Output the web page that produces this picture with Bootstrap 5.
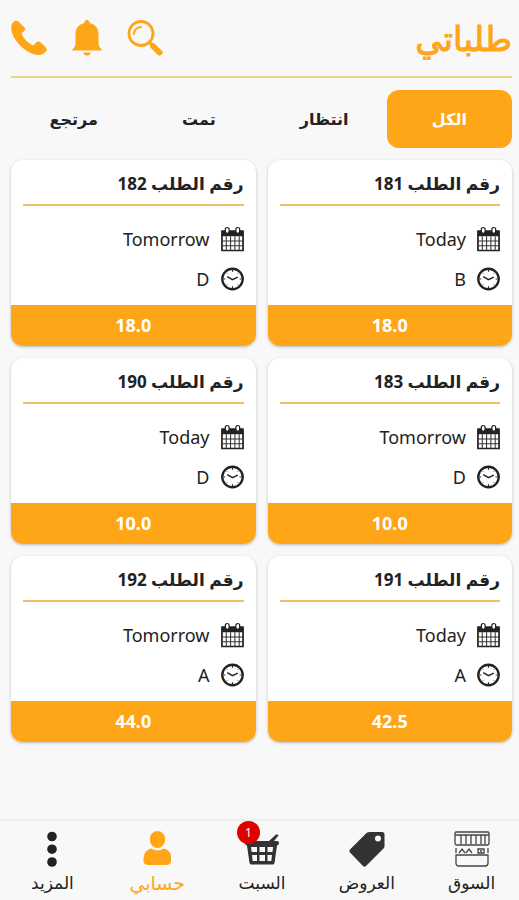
<!DOCTYPE html>
<html lang="ar" dir="rtl">
<head>
<meta charset="utf-8">
<meta name="viewport" content="width=device-width, initial-scale=1">
<title>طلباتي</title>
<link href="https://cdn.jsdelivr.net/npm/bootstrap@5.3.0/dist/css/bootstrap.min.css" rel="stylesheet">
<style>
  :root { --brand: #ffa518; --ink: #222; }
  body { background: #f8f8f8; color: var(--ink); font-family: "Noto Sans", "DejaVu Sans", sans-serif; font-size: 18px; line-height: 24px; }
  svg { display: block; }
  .page-head { height: 78px; padding-bottom: 1px; border-bottom: 2px solid #f0d28c; margin-inline: 7px 11px; color: var(--brand); }
  .page-head h1 { font-size: 34px; line-height: 44px; font-weight: 500; -webkit-text-stroke: 1px currentColor; }
  .icon-btn { border: 0; padding: 0; background: none; color: inherit; }
  .page-main { padding-block: 12px 96px; padding-inline: 7px 11px; }
  .filters .nav-link { height: 58px; border-radius: 12px; font-size: 16px; font-weight: 700; color: var(--ink); padding: 0; }
  .filters .nav-link.active { background: var(--brand); color: #fff; }
  .orders { display: grid; grid-template-columns: 1fr 1fr; gap: 12px; margin-top: 12px; }
  .order { border: 0; border-radius: 12px; overflow: hidden; box-shadow: 0 1px 3px rgba(0,0,0,.25); color: var(--ink); }
  .order .card-body { padding: 12px 12px 10px; }
  .order h2 { font-size: 17px; line-height: 24px; font-weight: 700; padding-bottom: 8px; border-bottom: 2px solid #efc063; margin: 0 0 17px; }
  .order-line { gap: 11px; height: 32px; margin-bottom: 8px; }
  .order-line:last-child { margin-bottom: 0; }
  .order .card-footer { background: var(--brand); color: #fff; border: 0; font-weight: 700; font-size: 18px; line-height: 25px; padding: 8px; border-radius: 0; }
  .tabbar { background: #f8f8f8; border-top: 2px solid #eee; height: 81px; margin-inline-start: -5px; }
  .tabbar a { color: var(--ink); font-size: 17px; line-height: 24px; padding-top: 10px; text-decoration: none; }
  .tabbar a.active { color: var(--brand); font-size: 19px; }
  .cart-count { position: absolute; top: -10px; left: -7px; width: 23px; height: 23px; border-radius: 50%; background: #e00000; color: #fff; font-size: 12px; line-height: 23px; }
</style>
</head>
<body>
<svg width="0" height="0" class="position-absolute" aria-hidden="true">
  <symbol id="calendar" viewBox="0 0 24 26">
    <path d="M1 5h22v20H1z" fill="none" stroke="#222" stroke-width="1.800"/>
    <path d="M1 4h22v6H1z" fill="#222"/>
    <path d="M1 15h22M1 20h22M5.500 10v15M10 10v15M14.500 10v15M19 10v15" stroke="#333" stroke-width="1.100"/>
    <g fill="#fff" stroke="#222" stroke-width="1.300"><rect x="4.500" y="1" width="4" height="6" rx="2"/><rect x="15.500" y="1" width="4" height="6" rx="2"/></g>
  </symbol>
  <symbol id="clock" viewBox="0 0 24 24">
    <circle cx="12" cy="12" r="10.700" fill="none" stroke="#222" stroke-width="2.400"/>
    <path d="M6.500 9.500l5.500 3.200 5.500-2.600" fill="none" stroke="#222" stroke-width="1.500"/>
    <path d="M12 2.500v2M12 19.500v2M2.500 12h2M19.500 12h2M5.300 5.300l1 1M18.700 5.300l-1 1M5.300 18.700l1-1M18.700 18.700l-1-1" stroke="#222" stroke-width="1"/>
  </symbol>
</svg>

<header class="page-head d-flex justify-content-between align-items-center">
  <h1 class="m-0">طلباتي</h1>
  <div class="d-flex align-items-center gap-4">
    <button class="icon-btn" type="button" aria-label="بحث">
      <svg width="36" height="36" viewBox="0 0 36 36" fill="none" stroke="currentColor"><circle cx="14" cy="13.500" r="12" stroke-width="2.800"/><path d="M7 14a7 7 0 0 1 7-7" stroke-width="2" stroke-linecap="round"/><path d="M26 26l6.500 6.500" stroke-width="6" stroke-linecap="round"/><path d="M22.500 22.500l3 3" stroke-width="3"/></svg>
    </button>
    <button class="icon-btn" type="button" aria-label="الإشعارات">
      <svg width="32" height="36" viewBox="0 0 32 36" fill="currentColor"><path d="M16 0a2.600 2.600 0 0 1 2.600 3C24.500 4.500 27.500 8.500 27.500 14v9c0 3 1 4.500 3.200 6.500v1H1.300v-1C3.500 27.500 4.500 26 4.500 23v-9c0-5.500 3-9.500 8.900-11A2.600 2.600 0 0 1 16 0zM12.500 32.500h7a3.500 3 0 0 1-7 0z"/></svg>
    </button>
    <button class="icon-btn" type="button" aria-label="اتصال">
      <svg width="36" height="36" viewBox="0 0 36 36" fill="currentColor"><path d="M2 2.500C3.500.500 6 0 7.500 1.500l6 6c1.200 1.300.8 2.300-.5 3.500l-2.500 2.500c2 5 6 9.500 12 12L25 22.500c1.500-1.200 3-1.400 4.300-.2l5.200 4.700c1.800 1.700 1.500 3.200.2 4.700-2.700 3.300-7 4-12 2.500C11.500 30.500 2.500 20 .500 11-.200 7.500.300 4.500 2 2.500z"/></svg>
    </button>
  </div>
</header>

<main class="page-main">
  <nav class="nav nav-pills nav-justified filters flex-nowrap" aria-label="حالة الطلب">
    <button type="button" class="nav-link active flex-fill w-25">الكل</button>
    <button type="button" class="nav-link flex-fill w-25">انتظار</button>
    <button type="button" class="nav-link flex-fill w-25">تمت</button>
    <button type="button" class="nav-link flex-fill w-25">مرتجع</button>
  </nav>

  <section class="orders">
    <article class="card order">
      <div class="card-body">
        <h2>رقم الطلب <span>181</span></h2>
        <div class="order-line d-flex align-items-center"><svg width="23" height="26"><use href="#calendar"/></svg><span>Today</span></div>
        <div class="order-line d-flex align-items-center"><svg width="23" height="24"><use href="#clock"/></svg><span>B</span></div>
      </div>
      <div class="card-footer text-center">18.0</div>
    </article>
    <article class="card order">
      <div class="card-body">
        <h2>رقم الطلب <span>182</span></h2>
        <div class="order-line d-flex align-items-center"><svg width="23" height="26"><use href="#calendar"/></svg><span>Tomorrow</span></div>
        <div class="order-line d-flex align-items-center"><svg width="23" height="24"><use href="#clock"/></svg><span>D</span></div>
      </div>
      <div class="card-footer text-center">18.0</div>
    </article>
    <article class="card order">
      <div class="card-body">
        <h2>رقم الطلب <span>183</span></h2>
        <div class="order-line d-flex align-items-center"><svg width="23" height="26"><use href="#calendar"/></svg><span>Tomorrow</span></div>
        <div class="order-line d-flex align-items-center"><svg width="23" height="24"><use href="#clock"/></svg><span>D</span></div>
      </div>
      <div class="card-footer text-center">10.0</div>
    </article>
    <article class="card order">
      <div class="card-body">
        <h2>رقم الطلب <span>190</span></h2>
        <div class="order-line d-flex align-items-center"><svg width="23" height="26"><use href="#calendar"/></svg><span>Today</span></div>
        <div class="order-line d-flex align-items-center"><svg width="23" height="24"><use href="#clock"/></svg><span>D</span></div>
      </div>
      <div class="card-footer text-center">10.0</div>
    </article>
    <article class="card order">
      <div class="card-body">
        <h2>رقم الطلب <span>191</span></h2>
        <div class="order-line d-flex align-items-center"><svg width="23" height="26"><use href="#calendar"/></svg><span>Today</span></div>
        <div class="order-line d-flex align-items-center"><svg width="23" height="24"><use href="#clock"/></svg><span>A</span></div>
      </div>
      <div class="card-footer text-center">42.5</div>
    </article>
    <article class="card order">
      <div class="card-body">
        <h2>رقم الطلب <span>192</span></h2>
        <div class="order-line d-flex align-items-center"><svg width="23" height="26"><use href="#calendar"/></svg><span>Tomorrow</span></div>
        <div class="order-line d-flex align-items-center"><svg width="23" height="24"><use href="#clock"/></svg><span>A</span></div>
      </div>
      <div class="card-footer text-center">44.0</div>
    </article>
  </section>
</main>

<nav class="tabbar fixed-bottom d-flex" aria-label="التنقل الرئيسي">
  <a href="#market" class="w-25 d-flex flex-column align-items-center gap-1">
    <svg width="36" height="36" viewBox="0 0 36 36" fill="none" stroke="#444" stroke-width="1.300"><path d="M1 2q0-1 1-1h32q1 0 1 1v10q0 2-2 2H3q-2 0-2-2zM1 4h34M7 4v9M12 4v9M17 4v9M22 4v9M27 4v9M31 4v9M2 17v5M34 17v5M2 24h32v8q0 3-3 3H5q-3 0-3-3zM5 22l3-4 3 4M12 22l3-4 3 4M24 22v-4h6v4zM26 20h2"/></svg>
    <span>السوق</span>
  </a>
  <a href="#offers" class="w-25 d-flex flex-column align-items-center gap-1">
    <svg width="36" height="36" viewBox="0 0 36 36"><path fill="#333" fill-rule="evenodd" d="M17.500 2Q19 1 21 1h12q2.500 0 2.500 2.500V15q0 1.500-1 2.500L17 35q-1.500 1.300-3 0L1 21.500q-1.300-1.500 0-3zM29 4.500a3 3 0 1 0 0 6 3 3 0 0 0 0-6z"/></svg>
    <span>العروض</span>
  </a>
  <a href="#cart" class="w-25 d-flex flex-column align-items-center gap-1">
    <span class="position-relative">
      <svg width="36" height="36" viewBox="0 0 36 36"><path fill="#333" fill-rule="evenodd" d="M1 10h24l7-6.500q2-.500 2.500 1L30 10h3q2 0 2 2t-2 2.500L30.500 32q-.500 1.500-2 1.500h-21q-1.500 0-2-1.500L3 14.500Q1 14 1 12zM7 16l.6 5H13v-5zm8.500 0v5H21v-5zm8 0v5h5l.6-5zM8 24l.7 6H13v-6zm7.500 0v6H21v-6zm8 0v6h3.800l.7-6z"/></svg>
      <span class="cart-count text-center">1</span>
    </span>
    <span>السبت</span>
  </a>
  <a href="#account" class="w-25 d-flex flex-column align-items-center gap-1 active" aria-current="page">
    <svg width="36" height="36" viewBox="0 0 36 36" fill="currentColor"><rect x="11" y="0" width="15" height="17" rx="7.500"/><path d="M12.500 17.500q6 4 12 0 7 1 7.500 8.500v5q-1 3-5 3H10q-5 0-5.500-3.500V27Q5.500 18.500 12.500 17.500z"/></svg>
    <span>حسابي</span>
  </a>
  <a href="#more" class="w-25 d-flex flex-column align-items-center gap-1">
    <svg width="36" height="36" viewBox="0 0 36 36" fill="#222"><circle cx="18" cy="5.500" r="4.800"/><circle cx="18" cy="18.200" r="4.800"/><circle cx="18" cy="31" r="4.800"/></svg>
    <span>المزيد</span>
  </a>
</nav>
<script src="https://cdn.jsdelivr.net/npm/bootstrap@5.3.0/dist/js/bootstrap.bundle.min.js"></script>
</body>
</html>
